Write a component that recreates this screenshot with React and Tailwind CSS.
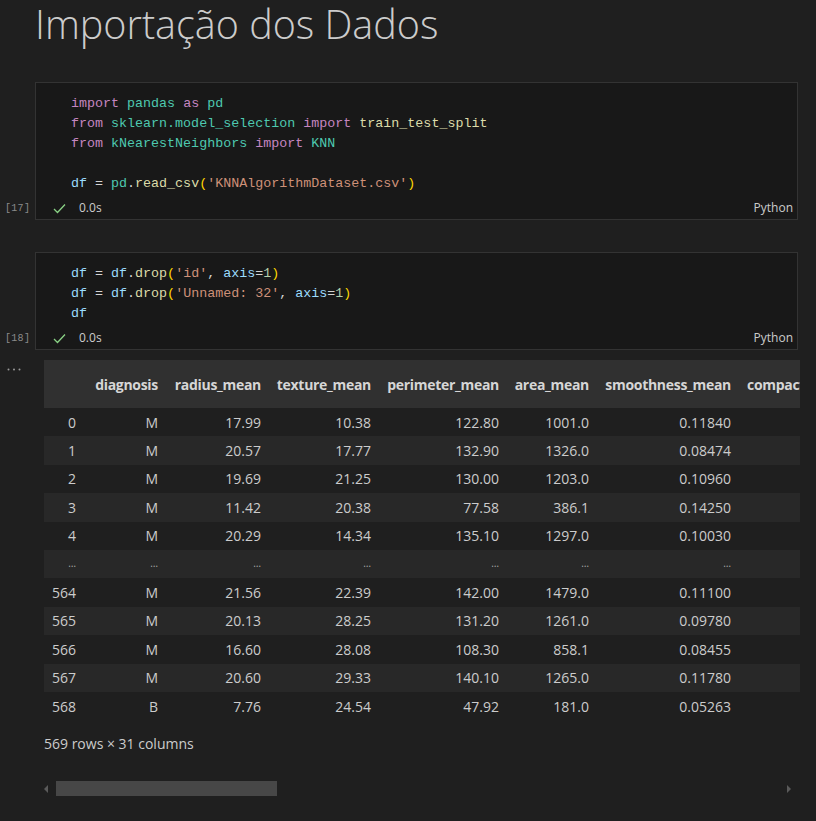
import React from "react";

const kw = "text-[#c586c0]";
const mod = "text-[#4ec9b0]";
const vr = "text-[#9cdcfe]";
const fn = "text-[#dcdcaa]";
const str = "text-[#ce9178]";
const par = "text-[#ffd700]";
const num = "text-[#b5cea8]";

const columns = [
  { key: "idx", label: "", width: "w-[40px]" },
  { key: "diagnosis", label: "diagnosis", width: "w-[82px]" },
  { key: "radius", label: "radius_mean", width: "w-[103px]" },
  { key: "texture", label: "texture_mean", width: "w-[110px]" },
  { key: "perimeter", label: "perimeter_mean", width: "w-[128px]" },
  { key: "area", label: "area_mean", width: "w-[90px]" },
  { key: "smooth", label: "smoothness_mean", width: "w-[142px]" },
];

const rows = [
  ["0", "M", "17.99", "10.38", "122.80", "1001.0", "0.11840"],
  ["1", "M", "20.57", "17.77", "132.90", "1326.0", "0.08474"],
  ["2", "M", "19.69", "21.25", "130.00", "1203.0", "0.10960"],
  ["3", "M", "11.42", "20.38", "77.58", "386.1", "0.14250"],
  ["4", "M", "20.29", "14.34", "135.10", "1297.0", "0.10030"],
  ["...", "...", "...", "...", "...", "...", "..."],
  ["564", "M", "21.56", "22.39", "142.00", "1479.0", "0.11100"],
  ["565", "M", "20.13", "28.25", "131.20", "1261.0", "0.09780"],
  ["566", "M", "16.60", "28.08", "108.30", "858.1", "0.08455"],
  ["567", "M", "20.60", "29.33", "140.10", "1265.0", "0.11780"],
  ["568", "B", "7.76", "24.54", "47.92", "181.0", "0.05263"],
];

function Check() {
  return (
    <svg width="13" height="11" viewBox="0 0 13 11" className="shrink-0">
      <polyline points="1,6 4.5,9.5 12,1.5" fill="none" stroke="#89d185" strokeWidth="1.3" />
    </svg>
  );
}

function Cell({ count, children }) {
  return (
    <div className="flex">
      <div className="w-[35px] shrink-0 flex flex-col justify-end pb-[1px]">
        <span className="text-[10px] tracking-[0.3px] text-[#8b8b8b] font-['Liberation_Mono',monospace] pl-[5px] leading-[20px]">
          [{count}]
        </span>
      </div>
      <div className="flex-1 mr-[18px] bg-[#181818] border border-[#333333] pt-[11px] pb-[1px]">
        <pre className="pl-[35px] font-['Liberation_Mono',monospace] text-[13.35px] leading-[20px] text-[#d4d4d4]">
          {children}
        </pre>
        <div className="mt-[4px] h-[20px] flex items-center pl-[17px] pr-[4px] font-['Open_Sans',sans-serif] text-[12px] text-[#cccccc]">
          <Check />
          <span className="ml-[13px]">0.0s</span>
          <span className="ml-auto">Python</span>
        </div>
      </div>
    </div>
  );
}

export default function App() {
  return (
    <div className="w-[816px] h-[821px] overflow-hidden bg-[#1f1f1f] font-['Open_Sans',sans-serif]">
      {/* Title */}
      <div className="h-[82px] pl-[35px]">
        <h1 className="text-[39.5px] leading-[48px] font-light text-[#cccccc]">Importação dos Dados</h1>
      </div>

      {/* Cell 17 */}
      <Cell count="17">
        <div>
          <span className={kw}>import</span> <span className={mod}>pandas</span> <span className={kw}>as</span>{" "}
          <span className={mod}>pd</span>
        </div>
        <div>
          <span className={kw}>from</span> <span className={mod}>sklearn.model_selection</span>{" "}
          <span className={kw}>import</span> <span className={fn}>train_test_split</span>
        </div>
        <div>
          <span className={kw}>from</span> <span className={mod}>kNearestNeighbors</span>{" "}
          <span className={kw}>import</span> <span className={mod}>KNN</span>
        </div>
        <div>&nbsp;</div>
        <div>
          <span className={vr}>df</span> = <span className={mod}>pd</span>.<span className={fn}>read_csv</span>
          <span className={par}>(</span>
          <span className={str}>'KNNAlgorithmDataset.csv'</span>
          <span className={par}>)</span>
        </div>
      </Cell>

      {/* Cell 18 */}
      <div className="mt-[32px]">
        <Cell count="18">
          <div>
            <span className={vr}>df</span> = <span className={vr}>df</span>.<span className={fn}>drop</span>
            <span className={par}>(</span>
            <span className={str}>'id'</span>, <span className={vr}>axis</span>=<span className={num}>1</span>
            <span className={par}>)</span>
          </div>
          <div>
            <span className={vr}>df</span> = <span className={vr}>df</span>.<span className={fn}>drop</span>
            <span className={par}>(</span>
            <span className={str}>'Unnamed: 32'</span>, <span className={vr}>axis</span>=<span className={num}>1</span>
            <span className={par}>)</span>
          </div>
          <div>
            <span className={vr}>df</span>
          </div>
        </Cell>
      </div>

      {/* Output */}
      <div className="flex mt-[10px]">
        <div className="w-[44px] shrink-0 pt-[8px] pl-[7px]">
          <svg width="14" height="3" viewBox="0 0 14 3">
            <circle cx="1.5" cy="1.5" r="1" fill="#9a9a9a" />
            <circle cx="7" cy="1.5" r="1" fill="#9a9a9a" />
            <circle cx="12.5" cy="1.5" r="1" fill="#9a9a9a" />
          </svg>
        </div>
        <div className="w-[756px] shrink-0">
          <div className="w-[756px] overflow-hidden">
            <table className="table-fixed border-collapse w-[851px] text-[14px] text-[#cccccc]">
              <thead>
                <tr className="bg-[#303030] h-[48px]">
                  {columns.map((c) => (
                    <th key={c.key} className={`${c.width} text-right pr-2 font-bold text-[#d6d6d6] tracking-[-0.3px] whitespace-nowrap`}>
                      {c.label}
                    </th>
                  ))}
                  <th className="w-[156px] text-left pl-2 font-bold text-[#d6d6d6] tracking-[-0.3px] whitespace-nowrap overflow-hidden">
                    compactness_mean
                  </th>
                </tr>
              </thead>
              <tbody>
                {rows.map((r, i) => (
                  <tr key={i} className={i % 2 === 1 ? "bg-[#282828] h-[28.4px]" : "h-[28.4px]"}>
                    {r.map((v, j) => (
                      <td
                        key={j}
                        className={
                          v === "..."
                            ? "text-right pr-2 text-[10px] text-[#aaaaaa] align-top pt-[6px]"
                            : "text-right pr-2"
                        }
                      >
                        {v === "..." ? "…" : v}
                      </td>
                    ))}
                    <td />
                  </tr>
                ))}
              </tbody>
            </table>
          </div>
          <div className="mt-[14px] h-[20px] leading-[20px] text-[14px] text-[#cccccc]">569 rows × 31 columns</div>
          <div className="mt-[27px] flex items-center h-[15px] pr-[8px]">
            <svg width="5" height="8" viewBox="0 0 5 8" className="shrink-0">
              <polygon points="4,0 0,4 4,8" fill="#5a5a5a" />
            </svg>
            <div className="ml-[7px] w-[221px] h-[15px] bg-[#474747]" />
            <svg width="5" height="8" viewBox="0 0 5 8" className="ml-auto shrink-0">
              <polygon points="0,0 4,4 0,8" fill="#5a5a5a" />
            </svg>
          </div>
        </div>
      </div>
    </div>
  );
}
